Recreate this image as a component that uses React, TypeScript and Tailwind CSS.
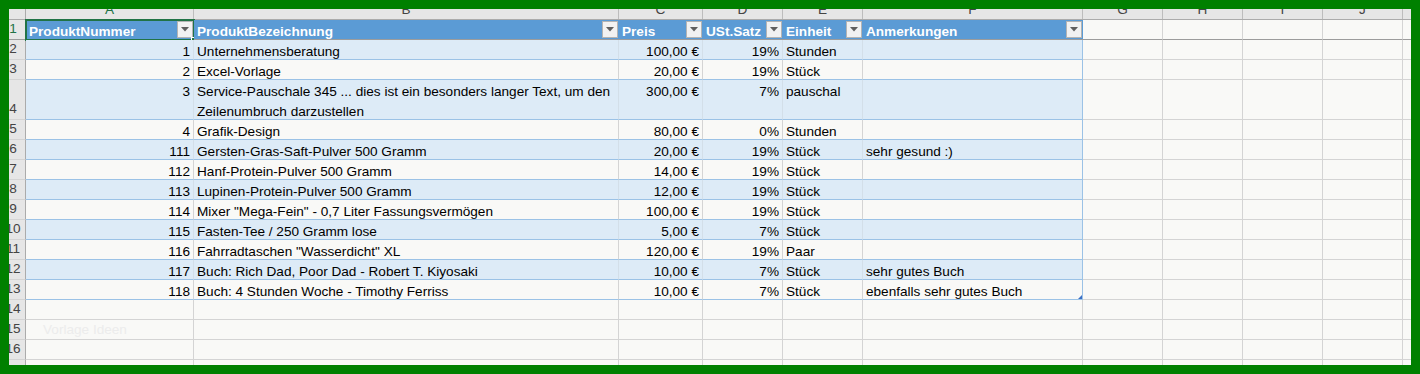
import React from 'react';

type Row = {
  n: string;
  a: string;
  b: string[];
  c: string;
  d: string;
  e: string;
  f: string;
  tall?: boolean;
};

const rows: Row[] = [
  { n: '2', a: '1', b: ['Unternehmensberatung'], c: '100,00 €', d: '19%', e: 'Stunden', f: '' },
  { n: '3', a: '2', b: ['Excel-Vorlage'], c: '20,00 €', d: '19%', e: 'Stück', f: '' },
  {
    n: '4',
    a: '3',
    b: ['Service-Pauschale 345 ... dies ist ein besonders langer Text, um den', 'Zeilenumbruch darzustellen'],
    c: '300,00 €',
    d: '7%',
    e: 'pauschal',
    f: '',
    tall: true,
  },
  { n: '5', a: '4', b: ['Grafik-Design'], c: '80,00 €', d: '0%', e: 'Stunden', f: '' },
  { n: '6', a: '111', b: ['Gersten-Gras-Saft-Pulver 500 Gramm'], c: '20,00 €', d: '19%', e: 'Stück', f: 'sehr gesund :)' },
  { n: '7', a: '112', b: ['Hanf-Protein-Pulver 500 Gramm'], c: '14,00 €', d: '19%', e: 'Stück', f: '' },
  { n: '8', a: '113', b: ['Lupinen-Protein-Pulver 500 Gramm'], c: '12,00 €', d: '19%', e: 'Stück', f: '' },
  { n: '9', a: '114', b: ['Mixer "Mega-Fein" - 0,7 Liter Fassungsvermögen'], c: '100,00 €', d: '19%', e: 'Stück', f: '' },
  { n: '10', a: '115', b: ['Fasten-Tee / 250 Gramm lose'], c: '5,00 €', d: '7%', e: 'Stück', f: '' },
  { n: '11', a: '116', b: ['Fahrradtaschen "Wasserdicht" XL'], c: '120,00 €', d: '19%', e: 'Paar', f: '' },
  { n: '12', a: '117', b: ['Buch: Rich Dad, Poor Dad - Robert T. Kiyosaki'], c: '10,00 €', d: '7%', e: 'Stück', f: 'sehr gutes Buch' },
  { n: '13', a: '118', b: ['Buch: 4 Stunden Woche - Timothy Ferriss'], c: '10,00 €', d: '7%', e: 'Stück', f: 'ebenfalls sehr gutes Buch' },
];

const tableCols = [
  { key: 'a', w: 'w-[168px]', letter: 'A', head: 'ProduktNummer', right: true },
  { key: 'b', w: 'w-[425px]', letter: 'B', head: 'ProduktBezeichnung', right: false },
  { key: 'c', w: 'w-[84px]', letter: 'C', head: 'Preis', right: true },
  { key: 'd', w: 'w-[80px]', letter: 'D', head: 'USt.Satz', right: true },
  { key: 'e', w: 'w-[80px]', letter: 'E', head: 'Einheit', right: false },
  { key: 'f', w: 'w-[220px]', letter: 'F', head: 'Anmerkungen', right: false },
] as const;

const extraCols = ['G', 'H', 'I', 'J', 'K'];

function FilterButton() {
  return (
    <div className="w-[16px] h-[17px] shrink-0 bg-[#f2f2f2] border border-[#b4b4b4] flex items-center justify-center">
      <svg width="8" height="5" viewBox="0 0 8 5">
        <polygon points="0,0 8,0 4,4.5" fill="#5f5f5f" />
      </svg>
    </div>
  );
}

function RowHead({ n, tall, dark }: { n: string; tall?: boolean; dark?: boolean }) {
  return (
    <div
      className={`w-[25px] shrink-0 bg-[#e6e6e6] border-r border-[#ababab] flex items-end justify-center text-[#444] leading-[20px] ${
        tall ? 'h-[40px]' : 'h-[20px]'
      } ${dark ? 'border-b border-b-[#9c9c9c]' : 'border-b border-b-[#d4d4d4]'}`}
    >
      <span className={n === '1' ? 'text-[#217346]' : ''}>{n}</span>
    </div>
  );
}

function EmptyCells({ tall }: { tall?: boolean }) {
  return (
    <>
      {extraCols.map(c => (
        <div
          key={c}
          className={`w-[80px] shrink-0 border-r border-b border-[#d4d4d4] ${tall ? 'h-[40px]' : 'h-[20px]'}`}
        />
      ))}
    </>
  );
}

export default function App() {
  return (
    <div className="w-[1420px] h-[374px] border-[9px] border-[#008000] overflow-hidden bg-[#f9f9f7] font-['Liberation_Sans',Arial,sans-serif] text-[13.6px] text-black">
      <div className="relative -mt-[9px] -ml-[8px] w-[1500px]">
        {/* Column letters */}
        <div className="flex h-[20px] bg-[#e6e6e6] border-b border-[#ababab]">
          <div className="w-[25px] shrink-0 border-r border-[#ababab]" />
          {tableCols.map(c => (
            <div
              key={c.key}
              className={`${c.w} shrink-0 border-r border-[#bdbdbd] text-center leading-[20px] ${
                c.letter === 'A' ? 'text-[#217346]' : 'text-[#444]'
              }`}
            >
              {c.letter}
            </div>
          ))}
          {extraCols.map(c => (
            <div key={c} className="w-[80px] shrink-0 border-r border-[#bdbdbd] text-center leading-[20px] text-[#444]">
              {c === 'K' ? '' : c}
            </div>
          ))}
        </div>

        {/* Header row */}
        <div className="flex">
          <RowHead n="1" dark />
          {tableCols.map(c => (
            <div
              key={c.key}
              className={`${c.w} shrink-0 h-[20px] bg-[#5b9bd5] border-b border-[#9c9c9c] flex items-start justify-between pl-[3px] pr-[1px] relative`}
            >
              <span className="font-bold text-white leading-[20px] pt-[2px]">{c.head}</span>
              <div className="pt-[1px]">
                <FilterButton />
              </div>
              {c.key === 'a' && (
                <div className="absolute -left-[1px] -top-[1px] w-[170px] h-[22px] border-2 border-[#217346] pointer-events-none">
                  <div className="absolute -right-[4px] -bottom-[4px] w-[6px] h-[6px] bg-[#217346] border border-white" />
                </div>
              )}
            </div>
          ))}
          {extraCols.map(c => (
            <div key={c} className="w-[80px] shrink-0 h-[20px] border-r border-[#d4d4d4] border-b border-b-[#9c9c9c]" />
          ))}
        </div>

        {/* Data rows */}
        {rows.map((r, i) => {
          const band = i % 2 === 0;
          const h = r.tall ? 'h-[40px]' : 'h-[20px]';
          const bg = band ? 'bg-[#ddebf7]' : '';
          const vline = band ? 'border-r-[#d3dfe9]' : 'border-r-[#d4d4d4]';
          return (
            <div key={r.n} className="flex">
              <RowHead n={r.n} tall={r.tall} />
              {tableCols.map(c => {
                const val = r[c.key];
                const lines = Array.isArray(val) ? val : [val];
                const last = c.key === 'f';
                return (
                  <div
                    key={c.key}
                    className={`${c.w} ${h} ${bg} shrink-0 overflow-hidden border-b border-b-[#9bc2e6] border-r ${
                      last ? 'border-r-[#9bc2e6]' : vline
                    } leading-[20px] pt-[2px] whitespace-nowrap relative ${
                      c.right ? 'text-right pr-[3px]' : 'text-left pl-[3px]'
                    }`}
                  >
                    {lines.map((l, j) => (
                      <div key={j}>{l}</div>
                    ))}
                    {last && r.n === '13' && (
                      <div className="absolute right-0 bottom-0 w-0 h-0 border-l-[4px] border-l-transparent border-b-[4px] border-b-[#3b6fc4]" />
                    )}
                  </div>
                );
              })}
              <EmptyCells tall={r.tall} />
            </div>
          );
        })}

        {/* Empty rows */}
        {['14', '15', '16', ''].map(n => (
          <div key={n || 'last'} className="flex relative">
            <RowHead n={n} />
            {tableCols.map(c => (
              <div key={c.key} className={`${c.w} h-[20px] shrink-0 border-r border-b border-[#d4d4d4]`} />
            ))}
            <EmptyCells />
            {n === '15' && (
              <span className="absolute left-[42px] top-0 leading-[20px] text-[#ececec]">Vorlage Ideen</span>
            )}
          </div>
        ))}
      </div>
    </div>
  );
}
